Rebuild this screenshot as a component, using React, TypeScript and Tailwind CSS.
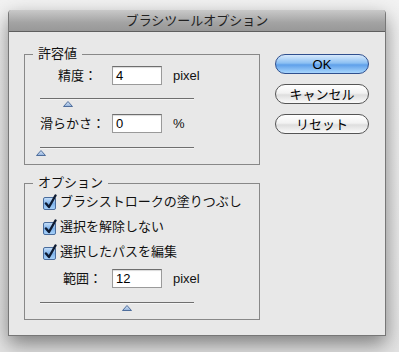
import React from 'react'

const font = "font-['Liberation_Sans','Noto_Sans_CJK_JP',sans-serif]"

function Thumb({ left }: { left: number }) {
  return (
    <svg
      className="absolute top-[2px]"
      style={{ left: left - 5 }}
      width="10"
      height="6"
      viewBox="0 0 10 6"
    >
      <defs>
        <linearGradient id="thumbFill" x1="0" y1="0" x2="0" y2="1">
          <stop offset="0" stopColor="#dce8f7" />
          <stop offset="1" stopColor="#8fb0dc" />
        </linearGradient>
      </defs>
      <polygon points="0.5,5.5 5,0.5 9.5,5.5" fill="url(#thumbFill)" stroke="#4f6e9c" strokeWidth="1" />
    </svg>
  )
}

function Slider({ pos, className = '' }: { pos: number; className?: string }) {
  return (
    <div className={`relative h-[9px] w-[154px] border-t border-[#6f6f6f] ${className}`}>
      <div className="h-px w-full bg-[#f4f4f4]" />
      <Thumb left={pos} />
    </div>
  )
}

function NumField({ value }: { value: string }) {
  return (
    <div className="flex h-[19px] w-[50px] items-center border border-[#9a9a9a] border-t-[#6e6e6e] bg-white pl-[3px] text-[13px] leading-none text-black shadow-[inset_0_1px_1px_rgba(0,0,0,0.15)]">
      {value}
    </div>
  )
}

function FieldRow({ label, indent, value, unit }: { label: string; indent: number; value: string; unit: string }) {
  return (
    <div className="flex h-[19px] items-center">
      <span className="w-[72px] whitespace-nowrap text-[13px] leading-none" style={{ paddingLeft: indent }}>
        {label}
      </span>
      <NumField value={value} />
      <span className="ml-[11px] text-[13px] leading-none">{unit}</span>
    </div>
  )
}

function Check({ label }: { label: string }) {
  return (
    <div className="flex h-[25px] items-center">
      <svg width="16" height="16" viewBox="0 0 16 16" className="ml-[2px] mr-[2px]">
        <defs>
          <linearGradient id="chkFill" x1="0" y1="0" x2="0" y2="1">
            <stop offset="0" stopColor="#c9e1fa" />
            <stop offset="0.5" stopColor="#7fb2ea" />
            <stop offset="1" stopColor="#a9d3fb" />
          </linearGradient>
        </defs>
        <rect x="1.5" y="3.5" width="12" height="12" rx="1.5" fill="url(#chkFill)" stroke="#4a6c9c" />
        <path d="M4 9.5 L7 13 L13.5 1.5" fill="none" stroke="#0d1b33" strokeWidth="2.4" strokeLinecap="round" strokeLinejoin="round" />
      </svg>
      <span className="text-[13px] leading-none">{label}</span>
    </div>
  )
}

function Button({ label, primary }: { label: string; primary?: boolean }) {
  return (
    <button
      type="button"
      className={`flex h-[20px] w-[94px] items-center justify-center rounded-full border text-[13px] leading-none text-black ${
        primary
          ? 'border-[#2f4f8e] bg-[linear-gradient(#d7e9fc,#8cc0f3_45%,#5fa0ea_55%,#a8d6fd)]'
          : 'border-[#555] bg-[linear-gradient(#ffffff,#f2f2f2_45%,#dedede_55%,#fafafa)]'
      }`}
    >
      {label}
    </button>
  )
}

export default function App() {
  return (
    <div className={`h-[352px] w-[399px] bg-[linear-gradient(#f2f2f2,#e4e4e4)] pl-[8px] pt-[10px] ${font} text-[#111]`}>
      <div className="flex h-[326px] w-[378px] flex-col overflow-hidden rounded-t-[4px] border-x border-b border-[#777] bg-[#e8e8e8] shadow-[0_8px_20px_rgba(0,0,0,0.45)]">
        {/* Title bar */}
        <div className="flex h-[22px] shrink-0 items-center justify-center border-b border-[#5f5f5f] bg-[linear-gradient(#c9c9c9,#a3a3a3_60%,#989898)] text-[13px] text-[#222]">
          ブラシツールオプション
        </div>

        <div className="flex pl-[15px] pt-[14px]">
          {/* Left column */}
          <div className="flex w-[236px] flex-col gap-[10px]">
            <fieldset className="h-[119px] border border-[#888] pl-[15px]">
              <legend className="ml-[-7px] h-[16px] px-[5px] text-[13px] leading-[16px]">許容値</legend>
              <div className="mt-[4px]">
                <FieldRow label="精度：" indent={18} value="4" unit="pixel" />
              </div>
              <Slider pos={28} className="mt-[13px]" />
              <div className="mt-[7px]">
                <FieldRow label="滑らかさ：" indent={0} value="0" unit="%" />
              </div>
              <Slider pos={1} className="mt-[14px]" />
            </fieldset>

            <fieldset className="h-[145px] border border-[#888] pl-[15px]">
              <legend className="ml-[-7px] h-[16px] px-[5px] text-[13px] leading-[16px]">オプション</legend>
              <div className="mt-[-2px]">
                <Check label="ブラシストロークの塗りつぶし" />
                <Check label="選択を解除しない" />
                <Check label="選択したパスを編集" />
              </div>
              <div className="mt-[5px]">
                <FieldRow label="範囲：" indent={23} value="12" unit="pixel" />
              </div>
              <Slider pos={87} className="mt-[14px]" />
            </fieldset>
          </div>

          {/* Buttons */}
          <div className="ml-[15px] flex flex-col gap-[10px] pt-[8px]">
            <Button label="OK" primary />
            <Button label="キャンセル" />
            <Button label="リセット" />
          </div>
        </div>
      </div>
    </div>
  )
}
